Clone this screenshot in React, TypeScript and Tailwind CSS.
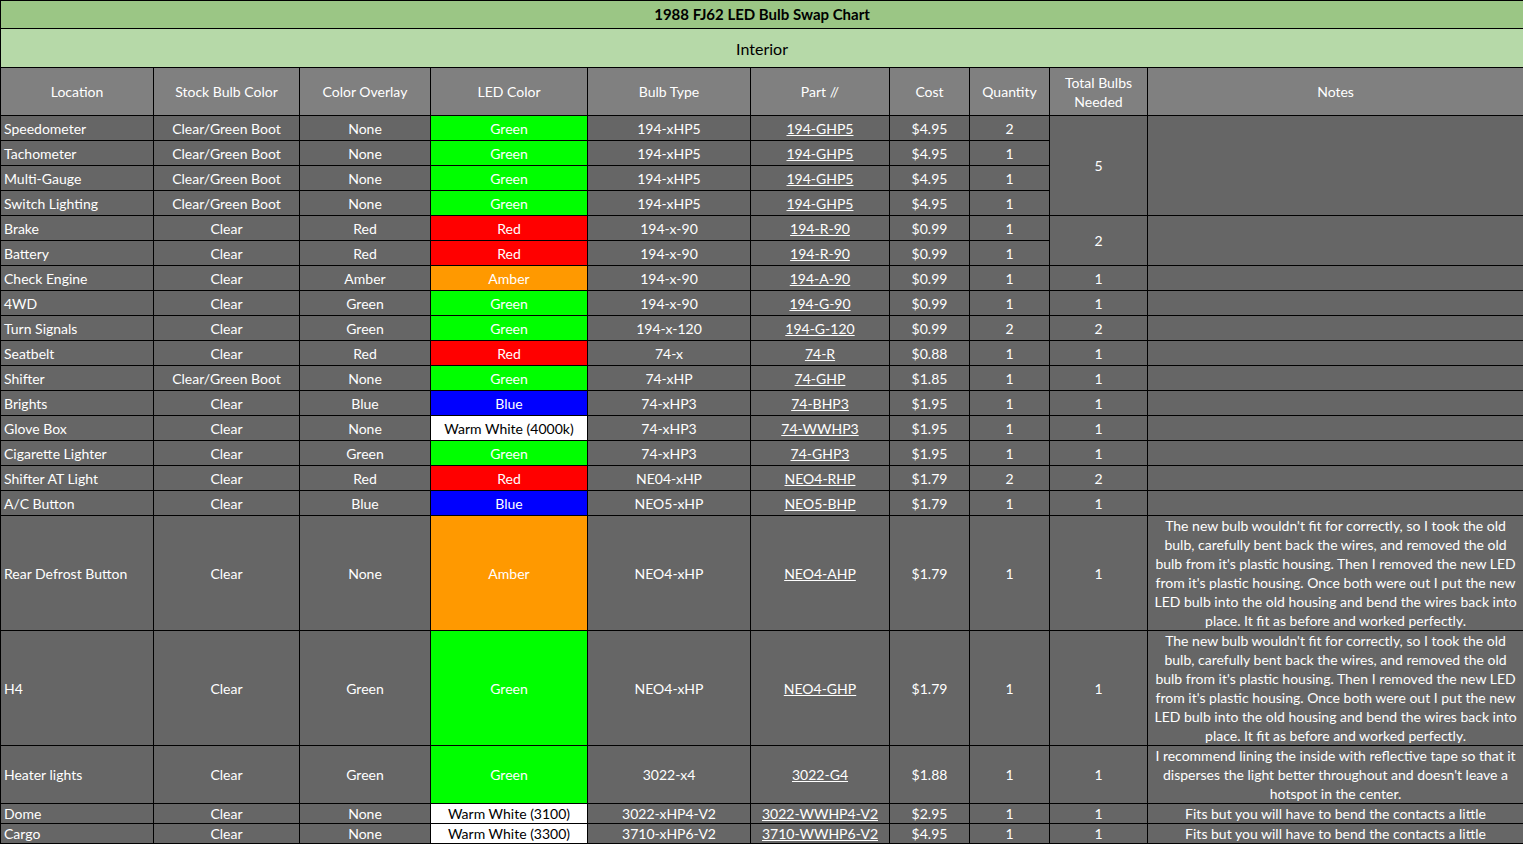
import React from "react";

type R = [string, string, string, string, string, string, string, string, string];
const rows: R[] = [
  ["Speedometer","Clear/Green Boot","None","Green","194-xHP5","194-GHP5","$4.95","2","g"],
  ["Tachometer","Clear/Green Boot","None","Green","194-xHP5","194-GHP5","$4.95","1","g"],
  ["Multi-Gauge","Clear/Green Boot","None","Green","194-xHP5","194-GHP5","$4.95","1","g"],
  ["Switch Lighting","Clear/Green Boot","None","Green","194-xHP5","194-GHP5","$4.95","1","g"],
  ["Brake","Clear","Red","Red","194-x-90","194-R-90","$0.99","1","r"],
  ["Battery","Clear","Red","Red","194-x-90","194-R-90","$0.99","1","r"],
  ["Check Engine","Clear","Amber","Amber","194-x-90","194-A-90","$0.99","1","a"],
  ["4WD","Clear","Green","Green","194-x-90","194-G-90","$0.99","1","g"],
  ["Turn Signals","Clear","Green","Green","194-x-120","194-G-120","$0.99","2","g"],
  ["Seatbelt","Clear","Red","Red","74-x","74-R","$0.88","1","r"],
  ["Shifter","Clear/Green Boot","None","Green","74-xHP","74-GHP","$1.85","1","g"],
  ["Brights","Clear","Blue","Blue","74-xHP3","74-BHP3","$1.95","1","b"],
  ["Glove Box","Clear","None","Warm White (4000k)","74-xHP3","74-WWHP3","$1.95","1","w"],
  ["Cigarette Lighter","Clear","Green","Green","74-xHP3","74-GHP3","$1.95","1","g"],
  ["Shifter AT Light","Clear","Red","Red","NE04-xHP","NEO4-RHP","$1.79","2","r"],
  ["A/C Button","Clear","Blue","Blue","NEO5-xHP","NEO5-BHP","$1.79","1","b"],
  ["Rear Defrost Button","Clear","None","Amber","NEO4-xHP","NEO4-AHP","$1.79","1","a"],
  ["H4","Clear","Green","Green","NEO4-xHP","NEO4-GHP","$1.79","1","g"],
  ["Heater lights","Clear","Green","Green","3022-x4","3022-G4","$1.88","1","g"],
  ["Dome","Clear","None","Warm White (3100)","3022-xHP4-V2","3022-WWHP4-V2","$2.95","1","w"],
  ["Cargo","Clear","None","Warm White (3300)","3710-xHP6-V2","3710-WWHP6-V2","$4.95","1","w"],
];
const ledCls: Record<string, string> = {
  g: "bg-[#00ff00] text-white",
  r: "bg-[#ff0000] text-white",
  a: "bg-[#ff9900] text-white",
  b: "bg-[#0000ff] text-white",
  w: "bg-white text-black",
};
const heights = [25,25,25,25,25,25,25,25,25,25,25,25,25,25,25,25,115,115,58,20,20];
const longNote = "The new bulb wouldn't fit for correctly, so I took the old bulb, carefully bent back the wires, and removed the old bulb from it's plastic housing. Then I removed the new LED from it's plastic housing. Once both were out I put the new LED bulb into the old housing and bend the wires back into place. It fit as before and worked perfectly.";
const notes: Record<number, string> = {
  16: longNote,
  17: longNote,
  18: "I recommend lining the inside with reflective tape so that it disperses the light better throughout and doesn't leave a hotspot in the center.",
  19: "Fits but you will have to bend the contacts a little",
  20: "Fits but you will have to bend the contacts a little",
};
const totals: Record<number, string> = { 6: "1", 7: "1", 8: "2", 9: "1", 10: "1", 11: "1", 12: "1", 13: "1", 14: "2", 15: "1", 16: "1", 17: "1", 18: "1", 19: "1", 20: "1" };

const td = "border border-black p-0 text-center align-middle";

export default function App() {
  return (
    <div className="w-[1523px] h-[844px] overflow-hidden bg-white text-white text-[14px] leading-[19px]" style={{ fontFamily: "Lato, 'Open Sans', sans-serif" }}>
      <table className="table-fixed border-collapse w-[1523px]">
        <colgroup>
          {[153,146,131,157,163,139,80,80,98,376].map((w, i) => <col key={i} style={{ width: w }} />)}
        </colgroup>
        <tbody>
          <tr className="h-[28px] bg-[#9bc685] text-black">
            <td colSpan={10} className={td + " font-bold text-[15px]"}>1988 FJ62 LED Bulb Swap Chart</td>
          </tr>
          <tr className="h-[39px] bg-[#b6d9a8] text-black">
            <td colSpan={10} className={td + " text-[16px]"}>Interior</td>
          </tr>
          <tr className="h-[48px] bg-[#808080]">
            {["Location","Stock Bulb Color","Color Overlay","LED Color","Bulb Type","Part //","Cost","Quantity"].map(h => <td key={h} className={td}>{h}</td>)}
            <td className={td}>Total Bulbs<br />Needed</td>
            <td className={td}>Notes</td>
          </tr>
          {rows.map((r, i) => (
            <tr key={i} className="bg-[#666666]" style={{ height: heights[i] }}>
              <td className={td + " text-left pl-[3px]"}>{r[0]}</td>
              <td className={td}>{r[1]}</td>
              <td className={td}>{r[2]}</td>
              <td className={td + " " + ledCls[r[8]]}>{r[3]}</td>
              <td className={td}>{r[4]}</td>
              <td className={td}><span className="underline">{r[5]}</span></td>
              <td className={td}>{r[6]}</td>
              <td className={td}>{r[7]}</td>
              {i === 0 && <td rowSpan={4} className={td}>5</td>}
              {i === 4 && <td rowSpan={2} className={td}>2</td>}
              {totals[i] && <td className={td}>{totals[i]}</td>}
              {i === 0 && <td rowSpan={4} className={td}></td>}
              {i === 4 && <td rowSpan={2} className={td}></td>}
              {i >= 6 && <td className={td + " px-[3px]"}>{notes[i] ?? ""}</td>}
            </tr>
          ))}
        </tbody>
      </table>
    </div>
  );
}
